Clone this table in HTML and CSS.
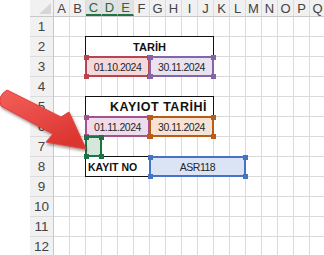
FILE: index.html
```html
<!DOCTYPE html>
<html>
<head>
<meta charset="utf-8">
<link rel="stylesheet" href="styles.css">
</head>
<body>
<div class="sheet">
  <div class="hdr">
    <div class="corner"><svg class="tri" width="12" height="11" viewBox="0 0 12 11"><polygon points="12,0 12,11 0,11" fill="#d6d6d6"/></svg></div>
    <div class="ch">A</div><div class="ch">B</div><div class="ch sel">C</div><div class="ch sel">D</div><div class="ch sel">E</div><div class="ch">F</div><div class="ch">G</div><div class="ch">H</div><div class="ch">I</div><div class="ch">J</div><div class="ch">K</div><div class="ch">L</div><div class="ch">M</div><div class="ch">N</div><div class="ch">O</div><div class="ch">P</div><div class="ch">Q</div>
  </div>
  <div class="body">
    <div class="rows">
      <div class="rh">1</div><div class="rh">2</div><div class="rh">3</div><div class="rh">4</div><div class="rh">5</div><div class="rh">6</div><div class="rh">7</div><div class="rh">8</div><div class="rh">9</div><div class="rh">10</div><div class="rh">11</div><div class="rh">12</div>
    </div>
    <div class="cells">
      <div class="box title t1">TARİH</div>
      <div class="rng red c-cf r3"><span>01.10.2024</span><i class="h tl"></i><i class="h tr"></i><i class="h bl"></i><i class="h br"></i></div>
      <div class="rng purple c-gj r3"><span>30.11.2024</span><i class="h tl"></i><i class="h tr"></i><i class="h bl"></i><i class="h br"></i></div>
      <div class="box title t2">KAYIOT TARİHİ</div>
      <div class="rng mag c-cf r6"><span>01.11.2024</span><i class="h tl"></i><i class="h tr"></i><i class="h bl"></i><i class="h br"></i></div>
      <div class="rng orange c-gj r6"><span>30.11.2024</span><i class="h tl"></i><i class="h tr"></i><i class="h bl"></i><i class="h br"></i></div>
      <div class="rng green c-c r7"><i class="h tl"></i><i class="h tr"></i><i class="h bl"></i><i class="h br"></i></div>
      <div class="box label">KAYIT NO</div>
      <div class="rng blue c-gl r8"><span>ASR118</span><i class="h tl"></i><i class="h tr"></i><i class="h bl"></i><i class="h br"></i></div>
    </div>
  </div>
  <svg class="arrow" width="324" height="255" viewBox="0 0 324 255">
    <defs>
      <linearGradient id="ag" x1="0" y1="0" x2="0.6" y2="1">
        <stop offset="0" stop-color="#f4605a"/>
        <stop offset="1" stop-color="#dc3530"/>
      </linearGradient>
    </defs>
    <path d="M7,90 L61,117 L69,112 L86,149 L46,142 L53,134 L1,106 Q-3,96 7,90 Z" fill="url(#ag)" stroke="#e0403b" stroke-width="1" stroke-linejoin="round"/>
  </svg>
</div>
</body>
</html>
```
FILE: styles.css
```css
html, body {
  margin: 0;
  padding: 0;
  background: #ffffff;
}
.sheet {
  position: relative;
  width: 324px;
  height: 255px;
  overflow: hidden;
  font-family: "Liberation Sans", Arial, sans-serif;
  background: #ffffff;
}
.hdr {
  display: flex;
  margin-left: 30px;
  height: 17px;
  background: #f1f1f1;
  border-bottom: 1px solid #c8c8c8;
  box-sizing: border-box;
}
.corner {
  width: 24px;
  flex: none;
  display: flex;
  align-items: flex-end;
  justify-content: flex-end;
  padding: 0 2px 2px 0;
  box-sizing: border-box;
  border-right: 1px solid #c8c8c8;
}
.ch {
  width: 16px;
  flex: none;
  box-sizing: border-box;
  border-right: 1px solid #dcdcdc;
  font-size: 13px;
  line-height: 17px;
  text-align: center;
  color: #444444;
}
.ch.sel {
  background: #e2e2e2;
  color: #1d6b40;
  border-bottom: 2px solid #217346;
  line-height: 16px;
}
.body {
  display: flex;
  margin-left: 30px;
}
.rows {
  width: 24px;
  flex: none;
  display: flex;
  flex-direction: column;
  background: #f1f1f1;
  border-right: 1px solid #c8c8c8;
  box-sizing: border-box;
}
.rh {
  height: 20px;
  box-sizing: border-box;
  border-bottom: 1px solid #dcdcdc;
  font-size: 13.5px;
  line-height: 20px;
  text-align: center;
  color: #444444;
}
.cells {
  display: grid;
  grid-template-columns: repeat(17, 16px);
  grid-template-rows: repeat(12, 20px);
  background-image:
    linear-gradient(to left, #dadada 1px, transparent 1px),
    linear-gradient(to top, #dadada 1px, transparent 1px);
  background-size: 16px 20px;
  background-position: 0 0;
}
.box {
  border: 1px solid #111111;
  margin: -1px 0 0 -1px;
  background: #ffffff;
  color: #111111;
  font-weight: bold;
  font-size: 11px;
  display: flex;
  align-items: center;
}
.title {
  grid-column: 3 / 11;
  justify-content: center;
}
.t1 { grid-row: 2; }
.t2 { grid-row: 5; font-size: 12.5px; letter-spacing: 0.5px; padding-left: 18px; white-space: nowrap; }
.label {
  grid-column: 3 / 7;
  grid-row: 8;
  padding-left: 2px;
  font-size: 10.5px;
}
.rng {
  position: relative;
  margin: -1px 0 0 -1px;
  border: 2px solid;
  display: flex;
  align-items: center;
  justify-content: center;
  font-size: 10.5px;
  letter-spacing: -0.5px;
  color: #262626;
}
.c-cf { grid-column: 3 / 7; }
.c-gj { grid-column: 7 / 11; }
.c-gl { grid-column: 7 / 13; }
.c-c { grid-column: 3 / 4; }
.r3 { grid-row: 3; }
.r6 { grid-row: 6; }
.r7 { grid-row: 7; }
.r8 { grid-row: 8; }
.h {
  position: absolute;
  width: 5px;
  height: 5px;
  background: currentColor;
}
.h.tl { left: -3.5px; top: -3.5px; }
.h.tr { right: -3.5px; top: -3.5px; }
.h.bl { left: -3.5px; bottom: -3.5px; }
.h.br { right: -3.5px; bottom: -3.5px; }
.rng span { color: #262626; }
.red { border-color: #b8454d; background: #f3d9db; color: #b8454d; }
.purple { border-color: #8466a8; background: #e8e2f1; color: #8466a8; }
.mag { border-color: #a3528d; background: #eedcea; color: #a3528d; }
.orange { border-color: #b95c18; background: #f7e3d6; color: #b95c18; }
.green { border-color: #1f7245; background: #d3e8da; color: #1f7245; }
.blue { border-color: #4673c4; background: #dbe4f4; color: #4673c4; }
.arrow {
  position: absolute;
  left: 0;
  top: 0;
  filter: drop-shadow(1px 2px 1.5px rgba(60, 0, 0, 0.45));
}
```
